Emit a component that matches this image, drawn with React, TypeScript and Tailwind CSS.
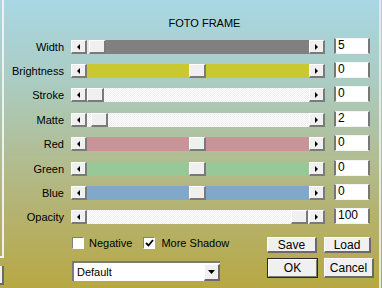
import React from "react";

const font = { fontFamily: '"Liberation Sans", Arial, sans-serif' };

function Arrow({ dir }: { dir: "left" | "right" | "down" }) {
  return (
    <div className="w-[16px] h-[14px] bg-[#f0f0f0] border-t border-l border-t-white border-l-white border-b-2 border-r-2 border-b-[#7a7a7a] border-r-[#7a7a7a] flex items-center justify-center shrink-0">
      <svg width="5" height="6" viewBox="0 0 5 6">
        {dir === "left" ? (
          <polygon points="4,0 4,6 1,3" fill="#000" />
        ) : (
          <polygon points="1,0 1,6 4,3" fill="#000" />
        )}
      </svg>
    </div>
  );
}

function Thumb() {
  return (
    <div className="w-[17px] h-[14px] bg-[#f0f0f0] border-t border-l border-t-white border-l-white border-b-2 border-r-2 border-b-[#7a7a7a] border-r-[#7a7a7a] shrink-0" />
  );
}

type Row = {
  label: string;
  value: string;
  track: string;
  pos: number;
  h: string;
  leftFill?: string;
};

const dither =
  "bg-[repeating-conic-gradient(#ffffff_0_25%,#eeeeee_0_50%)] bg-[length:2px_2px]";

const rows: Row[] = [
  { label: "Width", value: "5", track: "bg-[#808080]", pos: 2, h: "h-[24px]", leftFill: "bg-[#e6e6e6]" },
  { label: "Brightness", value: "0", track: "bg-[#c8c832]", pos: 102, h: "h-[24px]" },
  { label: "Stroke", value: "0", track: dither, pos: 0, h: "h-[25px]" },
  { label: "Matte", value: "2", track: dither, pos: 4, h: "h-[24px]" },
  { label: "Red", value: "0", track: "bg-[#c89498]", pos: 102, h: "h-[25px]" },
  { label: "Green", value: "0", track: "bg-[#98c898]", pos: 102, h: "h-[24px]" },
  { label: "Blue", value: "0", track: "bg-[#80a8c8]", pos: 102, h: "h-[24px]" },
  { label: "Opacity", value: "100", track: dither, pos: 204, h: "h-[24px]" },
];

function Slider({ r }: { r: Row }) {
  return (
    <div className="flex w-[254px] h-[14px]">
      <Arrow dir="left" />
      <div className={`flex-1 flex ${r.track}`}>
        <div className={`h-full ${r.leftFill ?? ""}`} style={{ width: r.pos }} />
        <Thumb />
      </div>
      <Arrow dir="right" />
    </div>
  );
}

function Btn({ children, w, h }: { children: React.ReactNode; w: string; h: string }) {
  return (
    <div className={`${w} ${h} shrink-0 bg-[#f0f0f0] border-t border-l border-t-white border-l-white border-b-2 border-r-2 border-b-[#6a6a6a] border-r-[#6a6a6a] flex items-center justify-center text-[12px] text-black`}>
      {children}
    </div>
  );
}

export default function App() {
  return (
    <div
      style={font}
      className="w-[382px] h-[288px] overflow-hidden flex bg-[linear-gradient(180deg,#a9d7e5_0%,#abcbbf_30%,#b1bd92_55%,#b4b373_72%,#b8a843_100%)] text-black"
    >
      {/* left window edge */}
      <div className="w-[4px] flex flex-col shrink-0">
        <div className="h-[258px] border-r-2 border-b-2 border-[#eef2ee]" />
        <div className="mt-[8px] h-[19px] bg-[#f0f0f0] border-r-2 border-b-2 border-[#6a6a6a]" />
      </div>

      <div className="w-[375px] flex flex-col shrink-0">
        <div className="h-[40px] flex items-start justify-center pt-[17px] pl-[26px] text-[11px] leading-[12px]">
          FOTO FRAME
        </div>
        {rows.map((r) => (
          <div key={r.label} className={`flex items-start ${r.h}`}>
            <div className="w-[60px] text-right text-[11px] leading-[14px]">{r.label}</div>
            <div className="w-[7px]" />
            <Slider r={r} />
            <div className="w-[9px]" />
            <div className="mt-[-2px] w-[36px] h-[16px] bg-white border-x-2 border-x-[#777] border-y border-y-[#f4f4f4] text-[12px] leading-[13px] pl-[2px]">
              {r.value}
            </div>
          </div>
        ))}

        {/* checkboxes + save/load */}
        <div className="flex items-start mt-[2px] h-[22px]">
          <div className="w-[68px]" />
          <div className="w-[12px] h-[12px] mt-[1px] bg-white border-t border-l border-[#808080] border-b border-r border-b-white border-r-white" />
          <div className="ml-[5px] text-[11px] leading-[14px]">Negative</div>
          <div className="w-[12px] h-[12px] mt-[1px] ml-[11px] bg-white border-t border-l border-[#808080] border-b border-r border-b-white border-r-white flex items-center justify-center">
            <svg width="9" height="8" viewBox="0 0 9 8">
              <polyline points="1,4 3.5,6.5 8,1" fill="none" stroke="#000" strokeWidth="1.8" />
            </svg>
          </div>
          <div className="ml-[6px] text-[11px] leading-[14px]">More Shadow</div>
          <div className="ml-auto mr-[8px] flex gap-[7px] mt-[1px]">
            <Btn w="w-[50px]" h="h-[16px]">Save</Btn>
            <Btn w="w-[47px]" h="h-[16px]">Load</Btn>
          </div>
        </div>

        {/* dropdown + ok/cancel */}
        <div className="flex items-start">
          <div className="w-[68px]" />
          <div className="mt-[3px] w-[148px] h-[20px] bg-white border-t-2 border-l-2 border-t-[#7a7a7a] border-l-[#7a7a7a] flex items-center">
            <div className="flex-1 text-[11px] pl-[3px] leading-[14px]">Default</div>
            <div className="w-[16px] h-[17px] bg-[#f0f0f0] border-t border-l border-white border-b-2 border-r-2 border-b-[#6a6a6a] border-r-[#6a6a6a] flex items-center justify-center">
              <svg width="7" height="4" viewBox="0 0 7 4">
                <polygon points="0,0 7,0 3.5,4" fill="#000" />
              </svg>
            </div>
          </div>
          <div className="ml-auto mr-[5px] flex gap-[6px]">
            <div className="w-[51px] h-[20px] border border-[#2a2a2a] shrink-0 flex">
              <div className="flex-1 bg-[#f0f0f0] border-t border-l border-t-white border-l-white border-b border-r border-b-[#7a7a7a] border-r-[#7a7a7a] flex items-center justify-center text-[12px]">
                OK
              </div>
            </div>
            <Btn w="w-[50px]" h="h-[20px]">Cancel</Btn>
          </div>
        </div>
      </div>

      {/* right window edge */}
      <div className="w-[2px] bg-[#e4e8e4] shrink-0" />
    </div>
  );
}
